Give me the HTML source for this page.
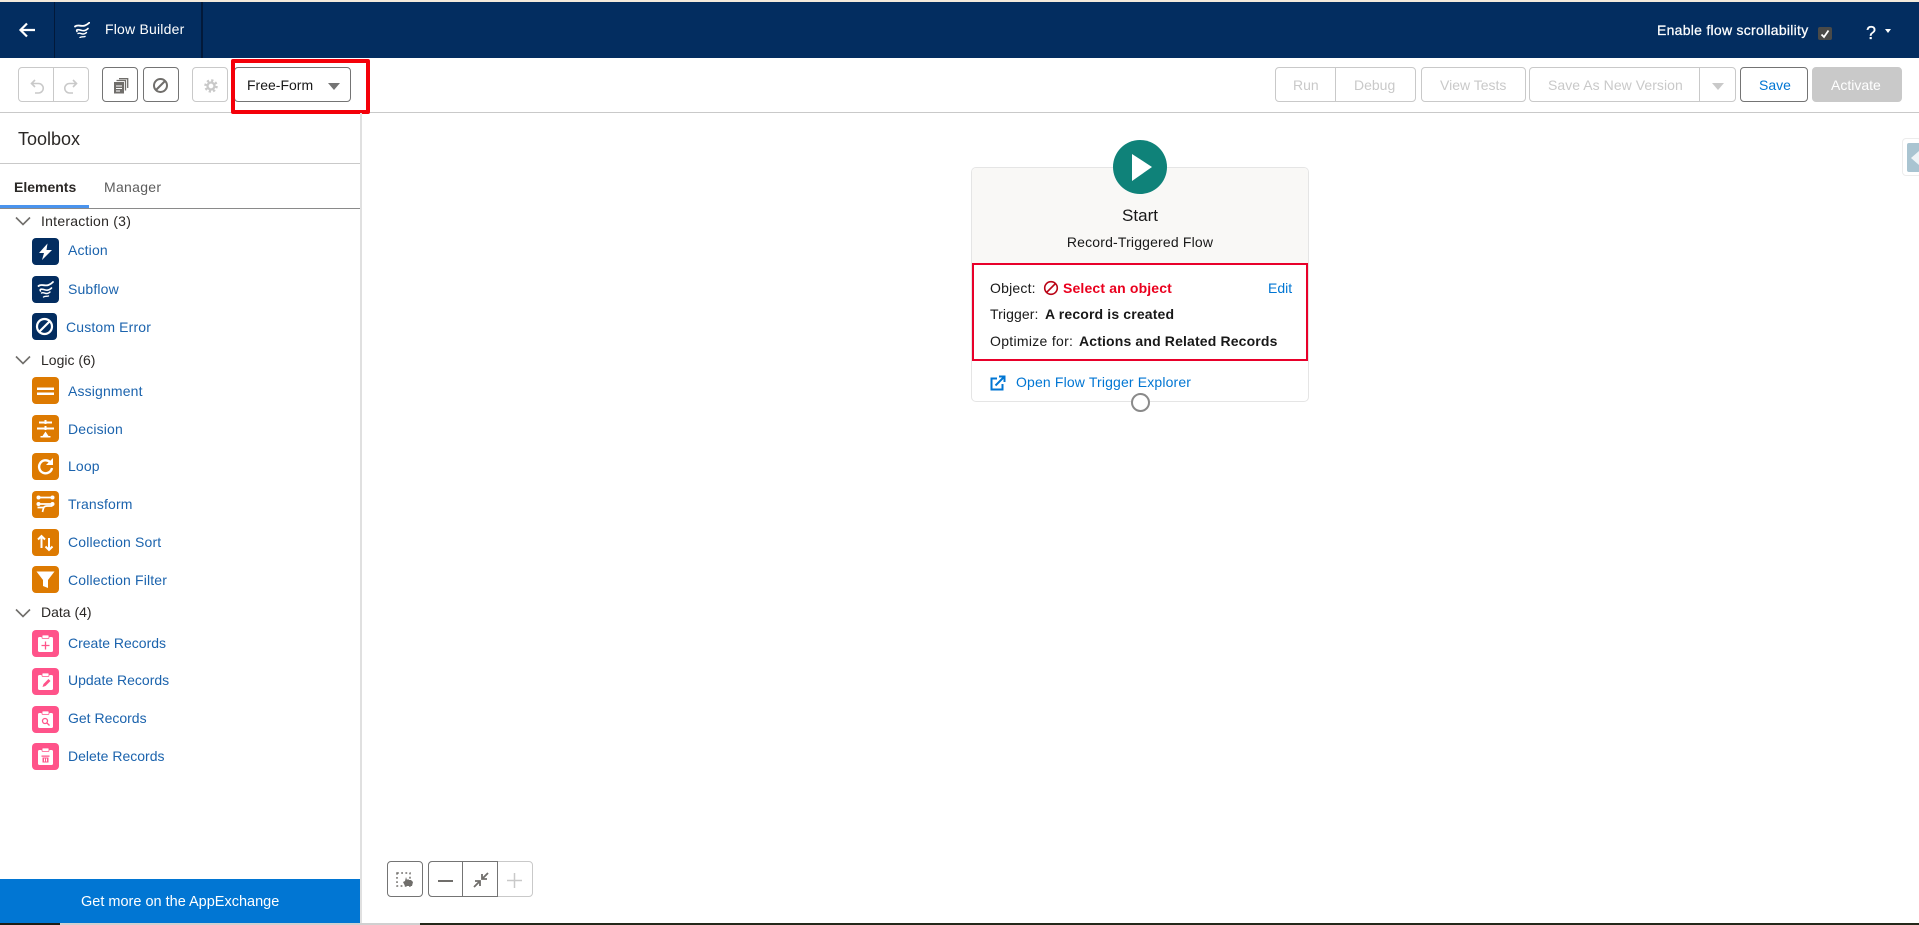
<!DOCTYPE html>
<html><head><meta charset="utf-8"><title>Flow Builder</title>
<style>
html,body{margin:0;padding:0;background:#fff;}
body{position:relative;width:1919px;height:925px;overflow:hidden;font-family:"Liberation Sans",sans-serif;font-size:14px;color:#181818;}
.a{position:absolute;}
.t{position:absolute;white-space:nowrap;line-height:20px;height:20px;}
.btn{position:absolute;top:67px;height:35px;box-sizing:border-box;border:1px solid #747474;border-radius:4px;background:#fff;}
.dis{border-color:#c9c9c9;}
.dv{position:absolute;top:67px;height:35px;width:1px;background:#c9c9c9;}
.dt{color:#c9c9c9;font-size:14px;}
.ic{position:absolute;border-radius:4px;width:27px;height:27px;left:32px;}
.navy{background:#032d60;}.or{background:#dd7a01;}.pk{background:#ff538a;}
.lk{color:#1b63ad;font-size:14px;left:68px;letter-spacing:.15px;}
.rec{letter-spacing:0;}
.hd{left:41px;font-size:14px;color:#2b2826;}
.b{font-weight:bold;color:#181818;letter-spacing:.15px;}
svg{display:block;}
</style></head><body>
<div class="a" style="left:0;top:0;width:1919px;height:2px;background:#f3e9db"></div>
<div class="a" style="left:0;top:2px;width:1919px;height:56px;background:#032d60"></div>
<div class="a" style="left:54px;top:2px;width:1px;height:56px;background:#02193a"></div>
<div class="a" style="left:201px;top:2px;width:2px;height:56px;background:#02193a"></div>
<svg class="a" style="left:18px;top:20px" width="19" height="20" viewBox="0 0 19 20"><path d="M17 10H3M9 3.500L2.500 10 9 16.500" fill="none" stroke="#fff" stroke-width="2.200"/></svg>
<svg class="a" style="left:74px;top:22px" width="16" height="16" viewBox="0 0 16 16"><g fill="none" stroke="#fff" stroke-linecap="round"><path d="M1 4.500C4 2 7 5 11 3.500 12.500 3 14 2 15.500 .5" stroke-width="1.800"/><path d="M3 9.500C1.500 7 5 7.500 8 8.500c2 .5 4 0 6-2" stroke-width="1.600"/><path d="M4 11.500c2-1 3 .5 5 .5 1.500 0 2.500-.5 3.500-1.500" stroke-width="1.400"/><path d="M6 15.500c1.500-1.200 3-.3 5-1" stroke-width="1.400"/></g></svg>
<div class="t" style="left:105px;top:19px;color:#fff;font-size:14px;letter-spacing:.2px">Flow Builder</div>
<div class="t" style="left:1657px;top:20px;color:#fff;font-size:14px;letter-spacing:.27px;-webkit-text-stroke:.25px #fff">Enable flow scrollability</div>
<div class="a" style="left:1818px;top:27px;width:14px;height:13px;background:#4a4a48;border-radius:2px"></div>
<svg class="a" style="left:1819px;top:28px" width="12" height="12" viewBox="0 0 12 12"><path d="M2.500 6.500L5 9 9.500 2.500" fill="none" stroke="#fff" stroke-width="1.800"/></svg>
<div class="t" style="left:1866px;top:23px;color:#fff;font-size:18px;-webkit-text-stroke:.3px #fff">?</div>
<div class="a" style="left:1885px;top:29px;width:0;height:0;border-left:3.500px solid transparent;border-right:3.500px solid transparent;border-top:4px solid #fff"></div>

<div class="a" style="left:0;top:112px;width:1919px;height:1px;background:#c9c9c9"></div>

<!-- left toolbar -->
<div class="btn dis" style="left:18px;width:71px"></div>
<div class="dv" style="left:53px"></div>
<svg class="a" style="left:30px;top:79px" width="14" height="15" viewBox="0 0 14 15"><path d="M5 1L1.500 4.500 5 8M1.500 4.500H8.500a4.750 4.750 0 0 1 0 9.500H5" fill="none" stroke="#c9c9c9" stroke-width="1.600"/></svg>
<svg class="a" style="left:64px;top:79px;transform:scaleX(-1)" width="14" height="15" viewBox="0 0 14 15"><path d="M5 1L1.500 4.500 5 8M1.500 4.500H8.500a4.750 4.750 0 0 1 0 9.500H5" fill="none" stroke="#c9c9c9" stroke-width="1.600"/></svg>
<div class="btn" style="left:102px;width:36px"></div>
<svg class="a" style="left:114px;top:78px" width="15" height="16" viewBox="0 0 15 16"><path d="M5 .7H13.700V10M2.500 2.500H11.500V12.500" fill="none" stroke="#706e6b" stroke-width="1.300"/><path d="M0 4h10v11.500H0z" fill="#706e6b"/><path d="M2 8h6M2 10.500h6M2 13h4" stroke="#fff" stroke-width="1"/></svg>
<div class="btn" style="left:143px;width:36px"></div>
<svg class="a" style="left:152px;top:77px" width="17" height="17" viewBox="0 0 17 17"><circle cx="8.500" cy="8.500" r="6.500" fill="none" stroke="#706e6b" stroke-width="2"/><path d="M4 13L13 4" stroke="#706e6b" stroke-width="2"/></svg>
<div class="btn dis" style="left:192px;width:36px"></div>
<svg class="a" style="left:204px;top:79px" width="14" height="14" viewBox="0 0 14 14"><circle cx="7" cy="7" r="3.500" fill="none" stroke="#c9c9c9" stroke-width="2.300"/><circle cx="7" cy="7" r="5.500" fill="none" stroke="#c9c9c9" stroke-width="2.500" stroke-dasharray="2.200 2.120"/></svg>
<div class="btn" style="left:234px;width:117px"></div>
<div class="t" style="left:247px;top:75px;font-size:14px;color:#181818">Free-Form</div>
<div class="a" style="left:328px;top:83px;width:0;height:0;border-left:6px solid transparent;border-right:6px solid transparent;border-top:7px solid #747474"></div>
<div class="a" style="left:231px;top:59px;width:139px;height:55px;box-sizing:border-box;border:4px solid #f40009;border-radius:2px"></div>

<!-- right toolbar -->
<div class="btn dis" style="left:1275px;width:141px"></div>
<div class="dv" style="left:1335px"></div>
<div class="t dt" style="left:1293px;top:75px">Run</div>
<div class="t dt" style="left:1354px;top:75px">Debug</div>
<div class="btn dis" style="left:1421px;width:105px"></div>
<div class="t dt" style="left:1440px;top:75px">View Tests</div>
<div class="btn dis" style="left:1529px;width:207px"></div>
<div class="dv" style="left:1699px"></div>
<div class="t dt" style="left:1548px;top:75px;letter-spacing:.05px">Save As New Version</div>
<div class="a" style="left:1712px;top:83px;width:0;height:0;border-left:6px solid transparent;border-right:6px solid transparent;border-top:7px solid #c9c9c9"></div>
<div class="btn" style="left:1740px;width:68px"></div>
<div class="t" style="left:1759px;top:75px;color:#0176d3">Save</div>
<div class="btn" style="left:1812px;width:90px;background:#c9c9c9;border-color:#c9c9c9"></div>
<div class="t" style="left:1831px;top:75px;color:#fff">Activate</div>

<!-- sidebar -->
<div class="a" style="left:360px;top:113px;width:2px;height:810px;background:#e0e0e0"></div>
<div class="t" style="left:18px;top:129px;font-size:18px;color:#2b2826">Toolbox</div>
<div class="a" style="left:0;top:163px;width:360px;height:1px;background:#c9c9c9"></div>
<div class="t" style="left:14px;top:177px;font-weight:bold;font-size:14px;color:#2b2826">Elements</div>
<div class="t" style="left:104px;top:177px;font-size:14px;color:#5c5c5c;letter-spacing:.3px">Manager</div>
<div class="a" style="left:0;top:205px;width:89px;height:3px;background:#4a94ee"></div>
<div class="a" style="left:0;top:208px;width:360px;height:1px;background:#8a8a8a"></div>

<svg class="a" style="left:15px;top:216px" width="16" height="10" viewBox="0 0 16 10"><path d="M1 1.500L8 8.500 15 1.500" fill="none" stroke="#706e6b" stroke-width="1.600"/></svg>
<div class="t hd" style="top:211px;letter-spacing:.25px">Interaction (3)</div>
<svg class="a" style="left:15px;top:355px" width="16" height="10" viewBox="0 0 16 10"><path d="M1 1.500L8 8.500 15 1.500" fill="none" stroke="#706e6b" stroke-width="1.600"/></svg>
<div class="t hd" style="top:350px">Logic (6)</div>
<svg class="a" style="left:15px;top:608px" width="16" height="10" viewBox="0 0 16 10"><path d="M1 1.500L8 8.500 15 1.500" fill="none" stroke="#706e6b" stroke-width="1.600"/></svg>
<div class="t hd" style="top:602px">Data (4)</div>

<div class="ic navy" style="top:238px"><svg width="27" height="27" viewBox="0 0 27 27"><path d="M15.500 5.500L7 15h5l-2 7L20 12h-5.500z" fill="#fff"/></svg></div>
<div class="t lk" style="top:240px">Action</div>
<div class="ic navy" style="top:276px"><svg width="27" height="27" viewBox="0 0 27 27"><g transform="translate(5.500 5.500)" fill="none" stroke="#fff" stroke-linecap="round"><path d="M1 4.500C4 2 7 5 11 3.500 12.500 3 14 2 15.500 .5" stroke-width="1.800"/><path d="M3 9.500C1.500 7 5 7.500 8 8.500c2 .5 4 0 6-2" stroke-width="1.600"/><path d="M4 11.500c2-1 3 .5 5 .5 1.500 0 2.500-.5 3.500-1.500" stroke-width="1.400"/><path d="M6 15.500c1.500-1.200 3-.3 5-1" stroke-width="1.400"/></g></svg></div>
<div class="t lk" style="top:279px">Subflow</div>
<div class="ic navy" style="top:313px;width:25px"><svg width="25" height="27" viewBox="0 0 25 27"><circle cx="12.500" cy="13.500" r="7.500" fill="none" stroke="#fff" stroke-width="2.200"/><path d="M7.500 18.500L17.500 8.500" stroke="#fff" stroke-width="2.200"/></svg></div>
<div class="t lk" style="top:317px;left:66px">Custom Error</div>

<div class="ic or" style="top:377px"><svg width="27" height="27" viewBox="0 0 27 27"><path d="M5 10.500h17v2.500H5zM5 15.500h17v2.500H5z" fill="#fff"/></svg></div>
<div class="t lk" style="top:381px">Assignment</div>
<div class="ic or" style="top:415px"><svg width="27" height="27" viewBox="0 0 27 27"><path d="M7 6.500h13v2H7zM5 12.500h17v2H5zM8.500 21h10v1.500h-10z" fill="#fff"/><path d="M12.500 5h2v4h-2zM12.500 11h2v4h-2zM13.500 16.500l-3 4.500h6z" fill="#fff"/></svg></div>
<div class="t lk" style="top:419px">Decision</div>
<div class="ic or" style="top:453px"><svg width="27" height="27" viewBox="0 0 27 27"><path d="M20 15a6.500 6.500 0 1 1-2-6" fill="none" stroke="#fff" stroke-width="2.400"/><path d="M21 5v7h-7z" fill="#fff"/></svg></div>
<div class="t lk" style="top:456px">Loop</div>
<div class="ic or" style="top:491px"><svg width="27" height="27" viewBox="0 0 27 27"><g fill="none" stroke="#fff" stroke-width="1.700"><path d="M7 6.500h13.500M7 13h13.500M20.500 15H15c-3.500 0-3.500 2-4.500 6M5.500 16.500h7"/></g><circle cx="6.500" cy="6.500" r="2" fill="#fff"/><circle cx="20.500" cy="6.500" r="2" fill="#fff"/><circle cx="6.500" cy="13" r="2" fill="#fff"/><circle cx="20.500" cy="13" r="2" fill="#fff"/></svg></div>
<div class="t lk" style="top:494px">Transform</div>
<div class="ic or" style="top:529px"><svg width="27" height="27" viewBox="0 0 27 27"><path d="M9.500 19V7M6 10.500L9.500 7l3.500 3.500M17 9v12M13.500 17.500L17 21l3.500-3.500" fill="none" stroke="#fff" stroke-width="2"/></svg></div>
<div class="t lk" style="top:532px">Collection Sort</div>
<div class="ic or" style="top:566px"><svg width="27" height="27" viewBox="0 0 27 27"><path d="M4.500 5.500h18L16 14v8l-5-2v-6z" fill="#fff"/></svg></div>
<div class="t lk" style="top:570px">Collection Filter</div>

<div class="ic pk" style="top:630px"><svg width="27" height="27" viewBox="0 0 27 27"><rect x="6" y="7" width="15" height="15" rx="1.500" fill="#fff"/><rect x="10" y="5" width="7" height="3.500" rx="1" fill="#fff" stroke="#ff538a" stroke-width=".8"/><path d="M13.500 11.500v8M9.500 15.500h8" stroke="#ff538a" stroke-width="1.300"/></svg></div>
<div class="t lk rec" style="top:633px">Create Records</div>
<div class="ic pk" style="top:668px"><svg width="27" height="27" viewBox="0 0 27 27"><rect x="6" y="7" width="15" height="15" rx="1.500" fill="#fff"/><rect x="10" y="5" width="7" height="3.500" rx="1" fill="#fff" stroke="#ff538a" stroke-width=".8"/><path d="M10.500 19l1-3 5-5 2 2-5 5z" fill="#ff538a"/></svg></div>
<div class="t lk rec" style="top:670px">Update Records</div>
<div class="ic pk" style="top:706px"><svg width="27" height="27" viewBox="0 0 27 27"><rect x="6" y="7" width="15" height="15" rx="1.500" fill="#fff"/><rect x="10" y="5" width="7" height="3.500" rx="1" fill="#fff" stroke="#ff538a" stroke-width=".8"/><circle cx="13" cy="15" r="2.500" fill="none" stroke="#ff538a" stroke-width="1.300"/><path d="M15 17l2.500 2.500" stroke="#ff538a" stroke-width="1.300"/></svg></div>
<div class="t lk rec" style="top:708px">Get Records</div>
<div class="ic pk" style="top:743px"><svg width="27" height="27" viewBox="0 0 27 27"><rect x="6" y="7" width="15" height="15" rx="1.500" fill="#fff"/><rect x="10" y="5" width="7" height="3.500" rx="1" fill="#fff" stroke="#ff538a" stroke-width=".8"/><path d="M9.500 12.500h8v1.200h-8zM10.500 14.500h6v5h-6z" fill="#ff538a"/><path d="M12.500 15.500v3M14.500 15.500v3" stroke="#fff"/></svg></div>
<div class="t lk rec" style="top:746px">Delete Records</div>

<div class="a" style="left:0;top:879px;width:360px;height:44px;background:#0176d3"></div>
<div class="t" style="left:81px;top:892px;color:#fff;font-size:14.500px">Get more on the AppExchange</div>

<div class="a" style="left:0;top:923px;width:60px;height:2px;background:#1d1d14"></div>
<div class="a" style="left:60px;top:923px;width:360px;height:2px;background:#d0d0d0"></div>
<div class="a" style="left:420px;top:923px;width:1499px;height:2px;background:#24281a"></div>

<!-- right tab -->
<div class="a" style="left:1902px;top:138px;width:20px;height:38px;box-sizing:border-box;border:1px solid #ececec;border-radius:4px;background:#fff"></div>
<div class="a" style="left:1907px;top:143px;width:14px;height:29px;background:#a9c4d1;border-radius:2px"></div>
<div class="a" style="left:1911px;top:151px;width:0;height:0;border-top:7px solid transparent;border-bottom:7px solid transparent;border-right:8px solid #eef4f7"></div>

<!-- start card -->
<div class="a" style="left:971px;top:167px;width:338px;height:235px;box-sizing:border-box;border:1px solid #e5e5e5;border-radius:5px;background:#fff"></div>
<div class="a" style="left:972px;top:168px;width:336px;height:95px;background:#f9f8f6;border-radius:4px 4px 0 0"></div>
<div class="a" style="left:1113px;top:140px;width:54px;height:54px;border-radius:50%;background:#0f8279"></div>
<svg class="a" style="left:1130px;top:152px" width="24" height="30" viewBox="0 0 24 30"><path d="M2 2L22 15 2 29z" fill="#fff"/></svg>
<div class="t" style="left:971px;width:338px;text-align:center;top:206px;font-size:17px;color:#181818">Start</div>
<div class="t" style="left:971px;width:338px;text-align:center;top:232px;font-size:14px;color:#181818;letter-spacing:.17px">Record-Triggered Flow</div>
<div class="a" style="left:972px;top:263px;width:336px;height:98px;box-sizing:border-box;border:2.500px solid #e8002a"></div>
<div class="t" style="left:990px;top:278px;letter-spacing:.2px">Object:</div>
<svg class="a" style="left:1043px;top:280px" width="16" height="16" viewBox="0 0 16 16"><circle cx="8" cy="8" r="6.300" fill="none" stroke="#ba0517" stroke-width="1.600"/><path d="M3.500 12.500L12.500 3.500" stroke="#ba0517" stroke-width="1.600"/></svg>
<div class="t" style="left:1063px;top:278px;font-weight:bold;color:#ea001e;letter-spacing:.15px">Select an object</div>
<div class="t" style="left:1268px;top:278px;color:#0176d3">Edit</div>
<div class="t" style="left:990px;top:304px;letter-spacing:.1px">Trigger:</div>
<div class="t b" style="left:1045px;top:304px">A record is created</div>
<div class="t" style="left:990px;top:331px;letter-spacing:.3px">Optimize for:</div>
<div class="t b" style="left:1079px;top:331px">Actions and Related Records</div>
<svg class="a" style="left:990px;top:375px" width="16" height="16" viewBox="0 0 16 16"><path d="M7 3.500H1.500v11h11V9" fill="none" stroke="#0176d3" stroke-width="2"/><path d="M5.500 10.500L14 2M9 1.500h5.500V7" fill="none" stroke="#0176d3" stroke-width="2"/></svg>
<div class="t" style="left:1016px;top:372px;color:#0176d3;letter-spacing:.15px">Open Flow Trigger Explorer</div>
<div class="a" style="left:1131px;top:393px;width:19px;height:19px;box-sizing:border-box;border:2px solid #8a8a8a;border-radius:50%;background:#fff"></div>

<!-- canvas controls -->
<div class="a" style="left:387px;top:861px;width:36px;height:36px;box-sizing:border-box;border:1px solid #747474;border-radius:4px"></div>
<svg class="a" style="left:396px;top:872px" width="18" height="16" viewBox="0 0 18 16"><rect x="1" y="1" width="13" height="13" fill="none" stroke="#706e6b" stroke-width="1.500" stroke-dasharray="1.800 2.400"/><path d="M7 10l2-1 1-4 1 3 1-1 1 1 2 0 2 2-1 4H9z" fill="#706e6b"/></svg>
<div class="a" style="left:428px;top:861px;width:105px;height:36px;box-sizing:border-box;border:1px solid #c9c9c9;border-radius:4px"></div>
<div class="a" style="left:428px;top:861px;width:70px;height:36px;box-sizing:border-box;border:1px solid #747474;border-right:1px solid #747474;border-radius:4px 0 0 4px"></div>
<div class="a" style="left:462px;top:861px;width:1px;height:36px;background:#747474"></div>
<div class="a" style="left:438px;top:880px;width:15px;height:2px;background:#706e6b"></div>
<svg class="a" style="left:473px;top:872px" width="16" height="16" viewBox="0 0 16 16"><path d="M15 1L10 6M9 2v5h5M1 15l5-5M2 9h5v5" fill="none" stroke="#706e6b" stroke-width="1.800"/></svg>
<svg class="a" style="left:507px;top:873px" width="15" height="15" viewBox="0 0 15 15"><path d="M7.500 0v15M0 7.500h15" stroke="#c9c9c9" stroke-width="1.500"/></svg>
</body></html>
